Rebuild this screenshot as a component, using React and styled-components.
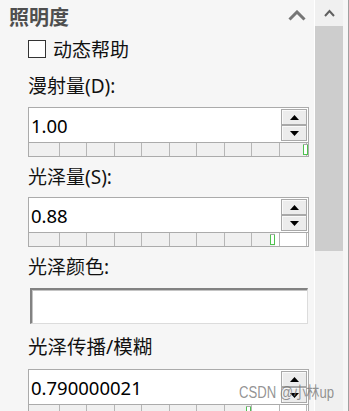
import React from "react";
import styled, { createGlobalStyle } from "styled-components";

const Global = createGlobalStyle`
  html, body { margin: 0; padding: 0; background: #f6f6f6; overflow: hidden; }
  body { font-family: "Noto Sans", "Noto Sans CJK SC", sans-serif; }
  * { box-sizing: border-box; }
`;

const Window = styled.div`
  position: relative;
  display: flex;
  align-items: flex-start;
  width: 349px;
  height: 411px;
  overflow: hidden;
  background: #f6f6f6;
`;

const Panel = styled.div`
  width: 315px;
  height: 411px;
  flex: none;
  display: flex;
  flex-direction: column;
  background: #f6f6f6;
  border-right: 1px solid #ffffff;
  overflow: hidden;
  & > * { flex-shrink: 0; }
`;

const Header = styled.div`
  height: 34px;
  display: flex;
  align-items: center;
  justify-content: space-between;
  padding: 0 8px 0 9px;
`;

const Title = styled.span`
  font-family: "Noto Sans CJK SC", sans-serif;
  font-size: 20px;
  font-weight: 700;
  line-height: 26px;
  color: #4f4f4f;
`;

const Collapse = styled.svg`
  width: 18px;
  height: 11px;
  margin-bottom: 4px;
`;

const Body = styled.div`
  display: flex;
  flex-direction: column;
  padding-left: 28px;
  & > * { flex-shrink: 0; }
`;

const CheckRow = styled.label`
  margin-top: 3px;
  height: 24px;
  display: flex;
  align-items: center;
  gap: 7px;
  font-size: 19px;
  line-height: 24px;
  color: #111;
  font-family: "Noto Sans CJK SC", sans-serif;
`;

const Box = styled.span`
  width: 18px;
  height: 18px;
  flex: none;
  border: 1px solid #333;
  background: #fff;
`;

const Label = styled.div`
  margin-top: ${(p) => p.$mt}px;
  height: 24px;
  line-height: 24px;
  font-size: ${(p) => p.$size || 19}px;
  color: #111;
  white-space: nowrap;
`;

const Field = styled.div`
  margin-top: ${(p) => p.$mt}px;
  width: 281px;
  border: 1px solid #ababab;
  background: #fff;
`;

const InputRow = styled.div`
  height: 35px;
  display: flex;
  border-bottom: 1px solid #ababab;
`;

const Value = styled.div`
  flex: 1;
  display: flex;
  align-items: center;
  padding-left: 2px;
  font-size: 18.5px;
  color: #000;
`;

const Spin = styled.div`
  width: 26px;
  margin: 1px 1px 1px 0;
  display: flex;
  flex-direction: column;
`;

const SpinButton = styled.div`
  height: 16px;
  display: flex;
  align-items: center;
  justify-content: center;
  background: #ececec;
  border: 1px solid #a9a9a9;
  box-shadow: inset 1px 1px 0 #fafafa;
`;

const Track = styled.div`
  position: relative;
  height: 13px;
  background-image:
    repeating-linear-gradient(90deg, transparent 0 26.5px, #b6b6b6 26.5px 27.5px),
    linear-gradient(90deg, #f0f0f0 0 ${(p) => p.$split}px, #ffffff ${(p) => p.$split}px);
  background-size: 100% 100%, 100% 100%;
  background-position: 2.5px 0, 0 0;
  background-repeat: no-repeat;
`;

const Thumb = styled.div`
  position: absolute;
  top: 1px;
  width: 5px;
  height: 11px;
  background: #fff;
  border: 1px solid #4fc24f;
  border-top-color: #a8a8a8;
  border-radius: 1px 1px 0 0;
`;

const ColorBox = styled.div`
  margin-top: 9px;
  margin-left: 2px;
  width: 278px;
  height: 36px;
  background: #fff;
  border-top: 2px solid #828282;
  border-left: 2px solid #828282;
  border-bottom: 1px solid #dcdcdc;
  border-right: 1px solid #dcdcdc;
  box-shadow: inset 1px 1px 0 #c4c4c4;
`;

const ScrollBar = styled.div`
  width: 28px;
  height: 411px;
  flex: none;
  display: flex;
  flex-direction: column;
  background: #f0f0f0;
  & > * { flex-shrink: 0; }
`;

const ScrollButton = styled.div`
  height: 26px;
  display: flex;
  align-items: center;
  justify-content: center;
`;

const ScrollThumb = styled.div`
  height: 225px;
  background: #cdcdcd;
`;

const Gap = styled.div`
  width: 5px;
  height: 411px;
  flex: none;
  background: #f6f6f6;
`;

const Edge = styled.div`
  width: 1px;
  height: 411px;
  flex: none;
  background: #a0a0a0;
`;

const Watermark = styled.div`
  position: absolute;
  left: 239px;
  top: 385px;
  font-family: "Liberation Sans", "Noto Sans CJK SC", sans-serif;
  font-size: 16px;
  line-height: 16px;
  white-space: nowrap;
  color: rgba(120, 120, 120, 0.8);
  transform: scaleX(0.82);
  transform-origin: left top;
  pointer-events: none;
`;

const Up = () => (
  <svg width="9" height="5" viewBox="0 0 9 5">
    <polygon points="0,5 9,5 4.5,0" fill="#000" />
  </svg>
);

const Down = () => (
  <svg width="9" height="5" viewBox="0 0 9 5">
    <polygon points="0,0 9,0 4.5,5" fill="#000" />
  </svg>
);

function NumberField({ value, fraction, mt }) {
  const left = 1 + fraction * 273;
  return (
    <Field $mt={mt}>
      <InputRow>
        <Value>{value}</Value>
        <Spin>
          <SpinButton><Up /></SpinButton>
          <SpinButton><Down /></SpinButton>
        </Spin>
      </InputRow>
      <Track $split={Math.round(left + 5)}>
        <Thumb style={{ left: `${left}px` }} />
      </Track>
    </Field>
  );
}

export default function App() {
  return (
    <Window>
      <Global />
      <Panel>
        <Header>
          <Title>照明度</Title>
          <Collapse viewBox="0 0 18 11">
            <path d="M1.5 9.5 L9 2 L16.5 9.5" fill="none" stroke="#767676" strokeWidth="3" />
          </Collapse>
        </Header>
        <Body>
          <CheckRow>
            <Box />
            动态帮助
          </CheckRow>
          <Label $mt={13}>漫射量(D):</Label>
          <NumberField value="1.00" fraction={1} mt={9} />
          <Label $mt={8}>光泽量(S):</Label>
          <NumberField value="0.88" fraction={0.88} mt={8} />
          <Label $mt={8}>光泽颜色:</Label>
          <ColorBox />
          <Label $mt={11} $size={19.5}>光泽传播/模糊</Label>
          <NumberField value="0.790000021" fraction={0.79} mt={10} />
        </Body>
      </Panel>
      <ScrollBar>
        <ScrollButton>
          <svg width="11" height="8" viewBox="0 0 11 8">
            <path d="M1 7 L5.5 2 L10 7" fill="none" stroke="#606060" strokeWidth="2" />
          </svg>
        </ScrollButton>
        <ScrollThumb />
      </ScrollBar>
      <Gap />
      <Edge />
      <Watermark>CSDN @小林up</Watermark>
    </Window>
  );
}
